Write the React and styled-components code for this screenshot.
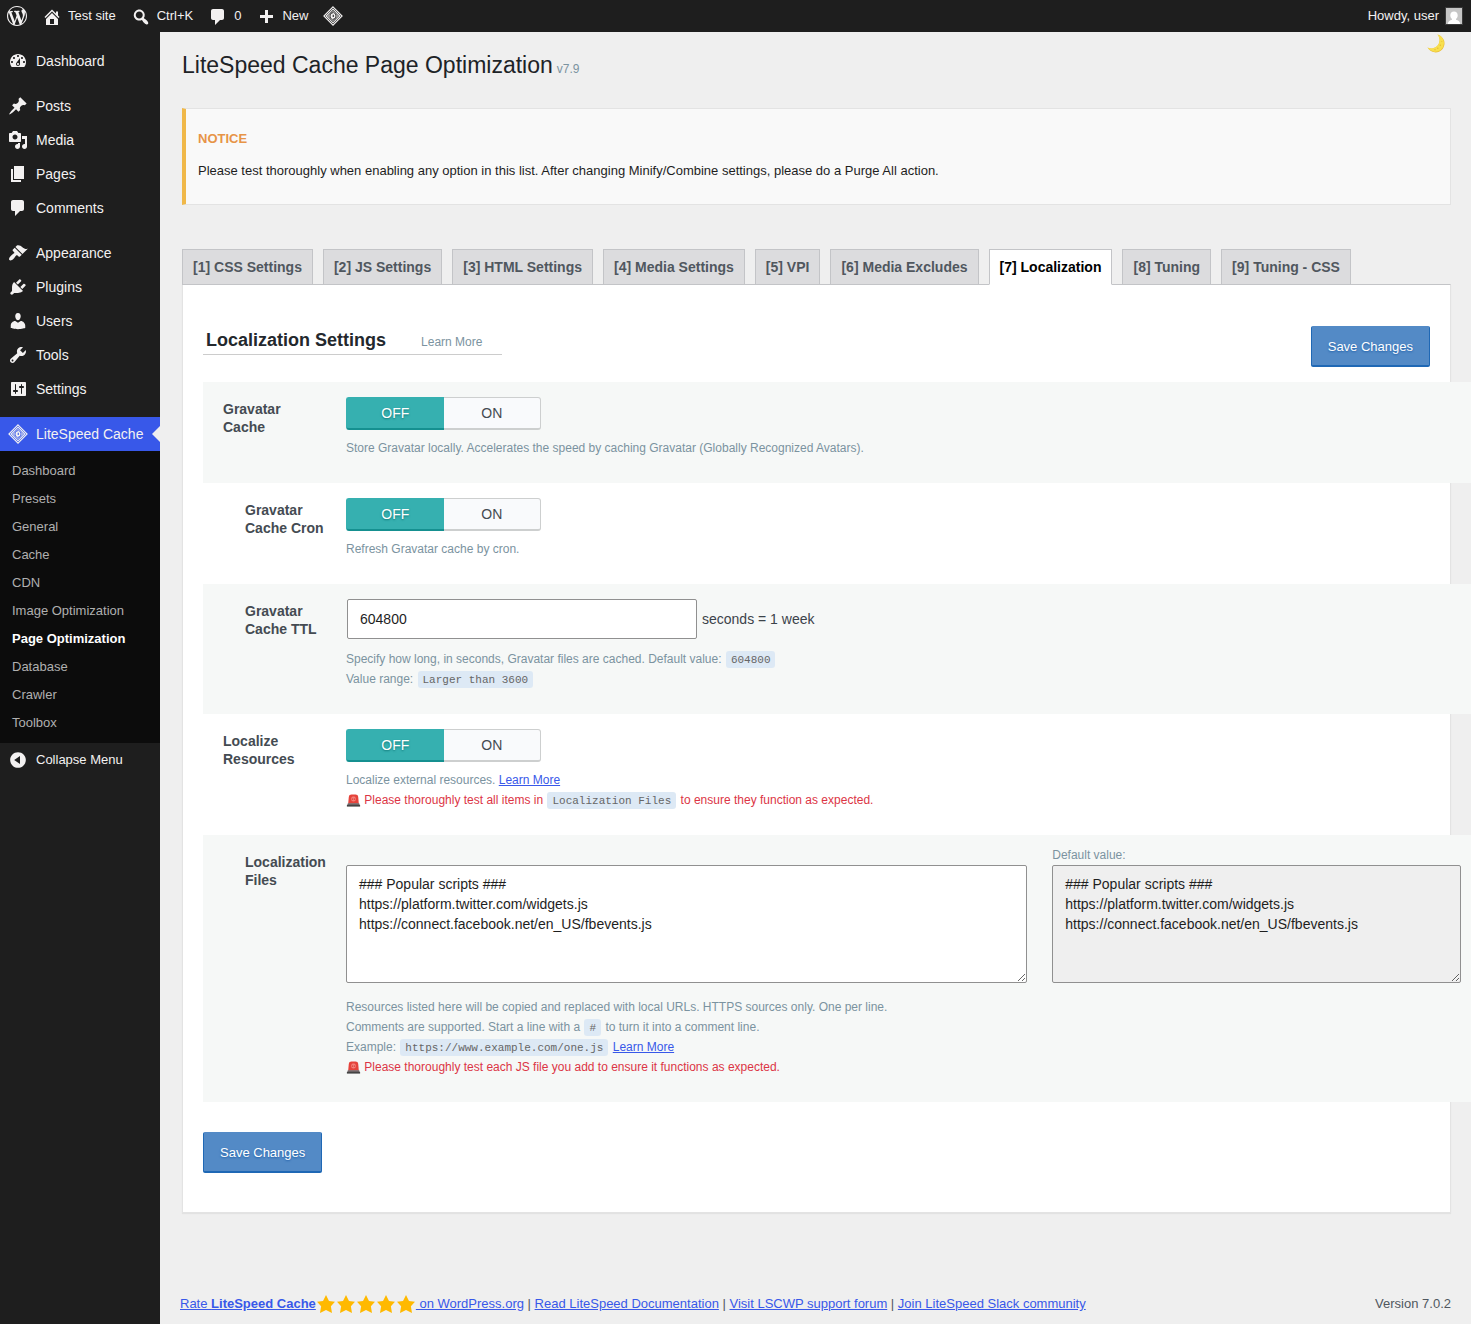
import React, { useState } from "react";
import styled, { createGlobalStyle, css } from "styled-components";

const GlobalStyle = createGlobalStyle`
    * {
        box-sizing: border-box;
    }

    body {
        margin: 0;
        background-color: #EFEFEF;
        color: #3C434A;
        font-family: "Liberation Sans", Arial, sans-serif;
        font-size: 13px;
        line-height: 20px;
        overflow-x: hidden;
    }

    a {
        color: #3858E9;
    }
`;

const icons = {
    wordpress: "M20 10c0-5.51-4.49-10-10-10C4.48 0 0 4.49 0 10c0 5.52 4.48 10 10 10 5.51 0 10-4.48 10-10zM7.78 15.37L4.37 6.22c.55-.02 1.17-.08 1.17-.08.5-.06.44-1.13-.06-1.11 0 0-1.45.11-2.37.11-.18 0-.37 0-.58-.01C4.12 2.69 6.87 1.11 10 1.11c2.33 0 4.45.87 6.05 2.34-.68-.11-1.65.39-1.65 1.58 0 .74.45 1.36.9 2.1.35.61.55 1.36.55 2.46 0 1.49-1.4 5-1.4 5l-3.03-8.37c.54-.02.82-.17.82-.17.5-.05.44-1.25-.06-1.22 0 0-1.44.12-2.38.12-.87 0-2.33-.12-2.33-.12-.5-.03-.56 1.2-.06 1.22l.92.08 1.26 3.41zM17.41 10c.24-.64.74-1.87.43-4.25.7 1.29 1.05 2.71 1.05 4.25 0 3.29-1.73 6.24-4.4 7.78.97-2.59 1.94-5.2 2.92-7.78zM6.1 18.09C3.12 16.65 1.11 13.53 1.11 10c0-1.3.23-2.48.72-3.59C3.25 10.3 4.67 14.2 6.1 18.09zm4.03-6.63l2.58 6.98c-.86.29-1.76.45-2.71.45-.79 0-1.57-.11-2.29-.33.81-2.38 1.62-4.74 2.42-7.1z",
    home: "M16 8.5l1.53 1.53-1.06 1.06L10 4.6l-6.47 6.49-1.06-1.06L10 2.5l4 4v-2h2v4zm-6-2.46l6 5.99V18H4v-5.97zM12 17v-5H8v5h4z",
    search: "M12.14 4.18c1.87 1.87 2.11 4.75.72 6.89.12.1.22.21.36.31.2.16.47.36.81.59.34.24.56.39.66.47.42.31.73.57.94.78.32.32.6.65.84 1 .25.35.44.69.59 1.04.14.35.21.68.18 1-.02.32-.14.59-.36.81s-.49.34-.81.36c-.31.02-.65-.04-.99-.19-.35-.14-.7-.34-1.04-.59-.35-.24-.68-.52-1-.84-.21-.21-.47-.52-.77-.93-.1-.13-.25-.35-.47-.66-.22-.32-.4-.57-.56-.78-.16-.2-.29-.35-.44-.5-2.07 1.09-4.69.76-6.44-.98-2.14-2.15-2.14-5.64 0-7.78 2.15-2.15 5.63-2.15 7.78 0zm-1.41 6.36c1.36-1.37 1.36-3.58 0-4.95-1.37-1.37-3.59-1.37-4.95 0-1.37 1.37-1.37 3.58 0 4.95 1.36 1.37 3.58 1.37 4.95 0z",
    plus: "M17 8v3h-5v5H9v-5H4V8h5V3h3v5h5z",
    dashboard: "M3.76 16h12.48c1.1-1.37 1.76-3.11 1.76-5 0-4.42-3.58-8-8-8s-8 3.58-8 8c0 1.89.66 3.63 1.76 5zM10 4c.55 0 1 .45 1 1s-.45 1-1 1-1-.45-1-1 .45-1 1-1zM6 6c.55 0 1 .45 1 1s-.45 1-1 1-1-.45-1-1 .45-1 1-1zm8 0c.55 0 1 .45 1 1s-.45 1-1 1-1-.45-1-1 .45-1 1-1zm-5.37 5.55L12 7v6c0 1.1-.9 2-2 2s-2-.9-2-2c0-.57.24-1.08.63-1.45zM4 10c.55 0 1 .45 1 1s-.45 1-1 1-1-.45-1-1 .45-1 1-1zm12 0c.55 0 1 .45 1 1s-.45 1-1 1-1-.45-1-1 .45-1 1-1zm-5 3c0-.55-.45-1-1-1s-1 .45-1 1 .45 1 1 1 1-.45 1-1z",
    post: "M10.44 3.02l1.82-1.82 6.36 6.35-1.83 1.82c-1.05-.68-2.48-.57-3.41.36l-.75.75c-.92.93-1.04 2.35-.35 3.41l-1.83 1.82-2.41-2.41-2.8 2.79c-.42.42-3.38 2.71-3.8 2.29s1.86-3.39 2.28-3.81l2.79-2.79L4.1 9.36l1.83-1.82c1.05.69 2.48.57 3.4-.36l.75-.75c.93-.92 1.05-2.35.36-3.41z",
    media: "M13 11V4c0-.55-.45-1-1-1h-1.67L9 1H5L3.67 3H2c-.55 0-1 .45-1 1v7c0 .55.45 1 1 1h10c.55 0 1-.45 1-1zM7 4.5c1.38 0 2.5 1.12 2.5 2.5S8.38 9.5 7 9.5 4.5 8.38 4.5 7 5.62 4.5 7 4.5zM14 6h5v10.5c0 1.38-1.12 2.5-2.5 2.5S14 17.88 14 16.5s1.12-2.5 2.5-2.5c.17 0 .34.02.5.05V9h-3V6zm-4 8.05V13h2v3.5c0 1.38-1.12 2.5-2.5 2.5S7 17.88 7 16.5 8.12 14 9.5 14c.17 0 .34.02.5.05z",
    page: "M6 15V2h10v13H6zm-1 1h8v2H3V5h2v11z",
    comments: "M5 2h9c1.1 0 2 .9 2 2v7c0 1.1-.9 2-2 2h-2l-5 5v-5H5c-1.1 0-2-.9-2-2V4c0-1.1.9-2 2-2z",
    appearance: "M14.48 11.06L7.41 3.99l1.5-1.5c.5-.56 2.3-.47 3.51.32 1.21.8 1.43 1.28 2.91 2.1 1.18.64 2.45 1.26 4.45.85zm-.71.71L6.7 4.7 4.93 6.47c-.39.39-.39 1.02 0 1.41l1.06 1.06c.39.39.39 1.03 0 1.42-.6.6-1.43 1.11-2.21 1.69-.35.26-.7.53-1.01.84C1.43 14.23.4 16.08 1.4 17.07c.99 1 2.84-.03 4.18-1.36.31-.31.58-.66.85-1.02.57-.78 1.08-1.61 1.69-2.21.39-.39 1.02-.39 1.41 0l1.06 1.06c.39.39 1.02.39 1.41 0z",
    plugins: "M13.11 4.36L9.87 7.6 8 5.73l3.24-3.24c.35-.34 1.05-.2 1.56.32.52.51.66 1.21.31 1.55zm-8 1.77l.91-1.12 9.01 9.01-1.19.84c-.71.71-2.63 1.16-3.82 1.16H6.14L4.9 17.26c-.59.59-1.54.59-2.12 0-.59-.58-.59-1.53 0-2.12l1.24-1.24v-3.88c0-1.13.4-3.19 1.09-3.89zm7.26 3.97l3.24-3.24c.34-.35 1.04-.21 1.55.31.52.51.66 1.21.31 1.55l-3.24 3.25z",
    users: "M10 9.25c-2.27 0-2.73-3.44-2.73-3.44C7 4.02 7.82 2 9.97 2c2.16 0 2.98 2.02 2.71 3.81 0 0-.41 3.44-2.68 3.44zm0 2.57L12.72 10c2.39 0 4.52 2.33 4.52 4.53v2.49s-3.65 1.13-7.24 1.13c-3.65 0-7.24-1.13-7.24-1.13v-2.49c0-2.25 1.94-4.48 4.47-4.48z",
    tools: "M16.68 9.77c-1.34 1.34-3.3 1.67-4.95.99l-5.41 6.52c-.99.99-2.59.99-3.58 0s-.99-2.59 0-3.57l6.52-5.42c-.68-1.65-.35-3.61.99-4.95 1.28-1.28 3.12-1.62 4.72-1.06l-2.89 2.89 2.82 2.82 2.86-2.87c.53 1.58.18 3.39-1.08 4.65zM3.81 16.21c.4.39 1.04.39 1.43 0 .4-.4.4-1.04 0-1.43-.39-.4-1.03-.4-1.43 0-.39.39-.39 1.03 0 1.43z",
    settings: "M18 16V4c0-.55-.45-1-1-1H4c-.55 0-1 .45-1 1v12c0 .55.45 1 1 1h13c.55 0 1-.45 1-1zM8 11h1c.55 0 1 .45 1 1s-.45 1-1 1H8v1.5c0 .28-.22.5-.5.5s-.5-.22-.5-.5V13H6c-.55 0-1-.45-1-1s.45-1 1-1h1V5.5c0-.28.22-.5.5-.5s.5.22.5.5V11zm5-2h-1c-.55 0-1-.45-1-1s.45-1 1-1h1V5.5c0-.28.22-.5.5-.5s.5.22.5.5V7h1c.55 0 1 .45 1 1s-.45 1-1 1h-1v5.5c0 .28-.22.5-.5.5s-.5-.22-.5-.5V9z",
    collapse: "M10 2.16c4.33 0 7.84 3.51 7.84 7.84s-3.51 7.84-7.84 7.84S2.16 14.33 2.16 10 5.67 2.16 10 2.16zm2 11.72V6.12L6.18 9.97z",
    star: "M10 1l3 6 6 .75-4.12 4.62L16 19l-6-3-6 3 1.13-6.63L1 7.75 7 7z",
};

const StyledSvg = styled.svg`
    width: 20px;
    height: 20px;
    flex-shrink: 0;
    fill: currentColor;
`;

const Icon = ({ name, className }) => (
    <StyledSvg viewBox="0 0 20 20" className={className} aria-hidden="true">
        <path fillRule="evenodd" d={icons[name]} />
    </StyledSvg>
);

const LiteSpeedIcon = ({ backdrop }) => (
    <StyledSvg viewBox="0 0 20 20" aria-hidden="true">
        <g fill="none" stroke="currentColor">
            <path strokeWidth="1.1" d="M10 .9L19.1 10 10 19.1.9 10z" />
            <path strokeWidth="1.1" d="M10 3.2L16.8 10 10 16.8 3.2 10z" />
        </g>
        <path d="M10 4.900L15.100 10 10 15.100 4.900 10z" />
        <g fill="none" stroke={backdrop} strokeWidth="1">
            <path d="M10.600 6.600A3.400 3.400 0 0 0 8.400 12.800" />
            <path d="M9.400 13.400A3.400 3.400 0 0 0 11.600 7.200" />
        </g>
        <path fill={backdrop} d="M9.700 8.800h1.100v2.200H9.700z" />
    </StyledSvg>
);

const StyledMoon = styled.svg`
    display: block;
    width: 18px;
    height: 19px;
`;

const Moon = () => (
    <StyledMoon viewBox="0 0 18 19" aria-hidden="true">
        <path fill="#E9BC38" d="M10.500.6A9 9 0 1 1 .5 13.500A8.300 8.300 0 0 0 10.500.6z" />
        <path fill="#F8E04E" d="M10.500.6A9 9 0 0 1 13.800 16A9.500 9.500 0 0 1 .5 13.500A8.300 8.300 0 0 0 10.500.6z" />
        <g fill="#E8B936">
            <circle cx="14.800" cy="7.400" r=".5" />
            <circle cx="13.300" cy="11.300" r=".7" />
            <circle cx="10.800" cy="14.200" r=".7" />
            <circle cx="8" cy="15.800" r=".7" />
        </g>
    </StyledMoon>
);

const StyledSiren = styled.svg`
    width: 15px;
    height: 13px;
    vertical-align: -3px;
`;

const Siren = () => (
    <StyledSiren viewBox="0 0 15 13" aria-hidden="true">
        <path fill="#E5433B" d="M2.200 9.500L2.800 2.900C3 1.300 4 .5 5.500.5h4c1.500 0 2.500.8 2.700 2.400l.6 6.600z" />
        <path fill="#F58078" d="M5.300 4.200C5.300 3 6.200 2.400 7.500 2.400s2.200.6 2.200 1.800v1.600c0 1-.9 1.700-2.200 1.700s-2.200-.7-2.200-1.700z" />
        <path fill="#C92F2B" d="M6.200 4.400h.9v1.300h-.9zM7.900 4.400h.9v1.300h-.9z" />
        <path fill="#6A6264" d="M1.900 9.300h11.200l.8 1.900H1.100z" />
        <path fill="#444" d="M.9 11h13.200v1.600H.9z" />
    </StyledSiren>
);

const StyledAdminBar = styled.header`
    display: flex;
    align-items: center;
    justify-content: space-between;
    height: 32px;
    padding: 0 8px 0 7px;
    background-color: #1E1E1E;
    color: #F3F1F1;
`;

const StyledBarGroup = styled.nav`
    display: flex;
    align-items: center;
    gap: 15px;
`;

const StyledBarLink = styled.a`
    display: flex;
    align-items: center;
    gap: 6px;
    color: inherit;
    text-decoration: none;
`;

const StyledBarIcon = styled(Icon)`
    margin-top: 2px;
`;

const StyledAvatar = styled.svg`
    width: 18px;
    height: 18px;
    border: 1px solid #3A3A3A;
`;

const StyledBody = styled.div`
    display: flex;
    min-height: calc(100vh - 32px);
`;

const StyledSidebar = styled.nav`
    flex: 0 0 160px;
    padding-top: 12px;
    background-color: #1E1E1E;
    color: #F3F1F1;
`;

const StyledMenu = styled.ul`
    margin: 0;
    padding: 0;
    list-style-type: none;
`;

const StyledMenuItem = styled.li`
    margin-top: ${props => (props.$spaced ? "11px" : "0")};
`;

const StyledMenuLink = styled.a`
    position: relative;
    display: flex;
    align-items: center;
    gap: 8px;
    height: 34px;
    padding-left: 8px;
    color: inherit;
    font-size: 14px;
    text-decoration: none;

    ${props =>
        props.$current &&
        css`
            background-color: #3858E9;

            &::after {
                content: "";
                position: absolute;
                right: 0;
                border: 8px solid transparent;
                border-left-width: 0;
                border-right-color: #EFEFEF;
            }
    `}
`;

const StyledSubMenu = styled.ul`
    margin: 0;
    padding: 6px 0;
    background-color: #0C0C0C;
    list-style-type: none;
`;

const StyledSubLink = styled.a`
    display: block;
    padding: 4px 12px;
    color: ${props => (props.$current ? "#FFF" : "#B0B0B0")};
    font-weight: ${props => (props.$current ? "bold" : "normal")};
    text-decoration: none;
`;

const StyledCollapse = styled.button`
    display: flex;
    align-items: center;
    gap: 8px;
    width: 100%;
    height: 34px;
    padding: 0 0 0 8px;
    border: 0;
    background: none;
    color: inherit;
    font: inherit;
`;

const StyledContent = styled.div`
    flex: 1;
    min-width: 0;
    display: flex;
    flex-direction: column;
    position: relative;
    padding: 0 20px 10px;
`;

const StyledMain = styled.main`
    padding: 18px 0 60px 2px;
`;

const StyledThemeButton = styled.button`
    position: absolute;
    top: 2px;
    right: 26px;
    padding: 0;
    border: 0;
    background: none;
`;

const StyledTitle = styled.h1`
    margin: 0;
    color: #1D2327;
    font-size: 23px;
    font-weight: normal;
    line-height: 30px;
`;

const StyledVersion = styled.small`
    margin-left: 4px;
    color: #7B93A0;
    font-size: 12px;
`;

const StyledNotice = styled.section`
    margin-top: 24px;
    padding: 20px 12px 24px;
    border: 1px solid #E3E3E3;
    border-left: 4px solid #F0B849;
    background-color: #F9F9F9;
    color: #1E1E1E;
`;

const StyledNoticeTitle = styled.h2`
    margin: 0 0 12px;
    color: #E79447;
    font-size: 13px;
    line-height: 20px;
`;

const StyledNoticeText = styled.p`
    margin: 0;
    line-height: 19px;
`;

const StyledTabs = styled.nav`
    display: flex;
    flex-wrap: wrap;
    gap: 0 10px;
    margin: 44px 0 -1px;
`;

const StyledTab = styled.a`
    position: relative;
    padding: 5px 10px;
    border: 1px solid #C3C4C7;
    background-color: #DCDCDE;
    color: #50575E;
    font-size: 14px;
    font-weight: bold;
    line-height: 24px;
    text-decoration: none;

    ${props =>
        props.$active &&
        css`
            border-bottom-color: #FFF;
            background-color: #FFF;
            color: #000;
    `}
`;

const StyledPanel = styled.form`
    padding: 41px 20px 39px;
    border: 1px solid #E3E3E3;
    border-top-color: #C3C4C7;
    background-color: #FFF;
    box-shadow: 0 1px 1px rgba(0, 0, 0, 0.05);
`;

const StyledPanelHeader = styled.div`
    display: flex;
    align-items: flex-start;
    justify-content: space-between;
    margin-bottom: 15px;
`;

const StyledPanelTitle = styled.h3`
    display: flex;
    align-items: baseline;
    gap: 35px;
    margin: 0;
    padding: 0 20px 0 3px;
    border-bottom: 1px solid #CCC;
    color: #23282D;
    font-size: 18px;
    line-height: 28px;
`;

const StyledDocLink = styled.a`
    color: #7B93A0;
    font-size: 12px;
    font-weight: normal;
    line-height: 20px;
    text-decoration: none;
`;

const StyledSave = styled.button`
    height: 41px;
    padding: 1px 16px 0;
    border: 1px solid #1F68B5;
    border-top-color: #538AC6;
    border-bottom-width: 2px;
    border-radius: 2px;
    background-color: #538AC6;
    color: #FFF;
    font: inherit;
    text-shadow: 0 1px 2px #1F5FA8;
`;

/* the table runs past the panel to the window's edge */
const StyledTable = styled.table`
    width: calc(100% + 41px);
    margin: 0 -41px 30px 0;
    border-collapse: collapse;
`;

const StyledRow = styled.tr`
    &:nth-child(odd) {
        background-color: #F6F8F7;
    }
`;

const StyledHeading = styled.th`
    width: 133px;
    padding: 18px ${props => (props.$indent ? "0 0 42px" : "20px 0 20px")};
    color: #444B52;
    font-size: 14px;
    line-height: 18px;
    text-align: left;
    vertical-align: top;
`;

const StyledCell = styled.td`
    padding: ${props => (props.$tight ? "10px" : "15px")} 10px 25px;
    font-size: 14px;
    vertical-align: top;
`;

const StyledSwitch = styled.div`
    display: flex;
    width: 195px;
    margin-bottom: 8px;
`;

const StyledRadio = styled.input`
    position: absolute;
    opacity: 0;
`;

const StyledOption = styled.label`
    flex: 1 1 50%;
    height: 33px;
    border: 1px solid #CDCFCF;
    border-left: 0;
    border-bottom-width: 2px;
    border-radius: 0 3px 3px 0;
    background-color: #F9FAFC;
    color: #444B52;
    line-height: 30px;
    text-align: center;

    &:first-of-type {
        border-left: 1px solid #CDCFCF;
        border-right: 0;
        border-radius: 3px 0 0 3px;
    }

    ${StyledRadio}:checked + && {
        border-color: #36B0B0;
        border-bottom-color: #159090;
        background-color: #36B0B0;
        color: #FFF;
        text-shadow: 0 1px 2px #117878;
    }

    ${StyledRadio}:focus-visible + & {
        outline: 2px solid #3858E9;
    }
`;

const StyledInput = styled.input`
    width: 350px;
    height: 40px;
    margin: 0 1px;
    padding: 0 12px;
    border: 1px solid #909090;
    border-radius: 2px;
    background-color: #FFF;
    color: #1E1E1E;
    font: inherit;
`;

const StyledInputLine = styled.div`
    display: flex;
    align-items: center;
    gap: 4px;
    margin-bottom: 10px;
`;

const StyledEditors = styled.div`
    display: flex;
    align-items: flex-end;
    gap: 25px;
    margin-bottom: 14px;
`;

const StyledEditor = styled.div`
    flex: ${props => props.$grow} 1 0;
    display: flex;
    flex-direction: column;
`;

const StyledEditorLabel = styled.label`
    color: #7B93A0;
    font-size: 12px;
    line-height: 20px;
`;

const StyledTextarea = styled.textarea`
    display: block;
    width: 100%;
    height: 118px;
    padding: 8px 12px;
    border: 1px solid #909090;
    border-radius: 2px;
    background-color: ${props => (props.readOnly ? "#EFEFEF" : "#FFF")};
    color: #1E1E1E;
    font: inherit;
    line-height: 20px;
`;

const StyledDesc = styled.div`
    color: #7B93A0;
    font-size: 12px;
    line-height: 20px;
`;

const StyledWarning = styled.span`
    color: #DC3545;
`;

const StyledCode = styled.code`
    margin: 0 1px;
    padding: 3px 5px 2px;
    border-radius: 3px;
    background-color: #DDE9F5;
    color: #666;
    font-family: "Liberation Mono", monospace;
    font-size: 11px;
    line-height: 1;
`;

const StyledFooter = styled.footer`
    display: flex;
    justify-content: space-between;
    gap: 20px;
    margin-top: auto;
    color: #50575E;
`;

const StyledStar = styled(Icon)`
    color: #FFB900;
    vertical-align: top;
`;

const menu = [
    { icon: "dashboard", label: "Dashboard" },
    { icon: "post", label: "Posts", spaced: true },
    { icon: "media", label: "Media" },
    { icon: "page", label: "Pages" },
    { icon: "comments", label: "Comments" },
    { icon: "appearance", label: "Appearance", spaced: true },
    { icon: "plugins", label: "Plugins" },
    { icon: "users", label: "Users" },
    { icon: "tools", label: "Tools" },
    { icon: "settings", label: "Settings" },
];

const subMenu = [
    "Dashboard",
    "Presets",
    "General",
    "Cache",
    "CDN",
    "Image Optimization",
    "Page Optimization",
    "Database",
    "Crawler",
    "Toolbox",
];

const tabs = [
    "CSS Settings",
    "JS Settings",
    "HTML Settings",
    "Media Settings",
    "VPI",
    "Media Excludes",
    "Localization",
    "Tuning",
    "Tuning - CSS",
];

const scripts = `### Popular scripts ###
https://platform.twitter.com/widgets.js
https://connect.facebook.net/en_US/fbevents.js`;

const AdminBar = () => (
    <StyledAdminBar>
        <StyledBarGroup>
            <StyledBarLink href="#about" aria-label="About WordPress"><Icon name="wordpress" /></StyledBarLink>
            <StyledBarLink href="#site"><StyledBarIcon name="home" />Test site</StyledBarLink>
            <StyledBarLink href="#search"><StyledBarIcon name="search" />Ctrl+K</StyledBarLink>
            <StyledBarLink href="#comments"><StyledBarIcon name="comments" />0</StyledBarLink>
            <StyledBarLink href="#new"><StyledBarIcon name="plus" />New</StyledBarLink>
            <StyledBarLink href="#litespeed" aria-label="LiteSpeed Cache"><LiteSpeedIcon backdrop="#1E1E1E" /></StyledBarLink>
        </StyledBarGroup>
        <StyledBarLink href="#profile">
            Howdy, user
            <StyledAvatar viewBox="0 0 16 16" aria-hidden="true">
                <path fill="#C6C6C6" d="M0 0h16v16H0z" />
                <path fill="#FFF" d="M8 3.5c2.3 0 3.7 1.6 3.7 3.8 0 1.6-.7 2.9-1.7 3.6v.9c2.2.5 3.8 1.6 4.3 4.2H1.7c.5-2.6 2.1-3.7 4.3-4.2v-.9C5 10.2 4.3 8.9 4.3 7.3c0-2.2 1.4-3.8 3.7-3.8z" />
            </StyledAvatar>
        </StyledBarLink>
    </StyledAdminBar>
);

const Sidebar = () => (
    <StyledSidebar aria-label="Main menu">
        <StyledMenu>
            {menu.map((item) => (
                <StyledMenuItem key={item.label} $spaced={item.spaced}>
                    <StyledMenuLink href="#menu"><Icon name={item.icon} />{item.label}</StyledMenuLink>
                </StyledMenuItem>
            ))}
            <StyledMenuItem $spaced>
                <StyledMenuLink href="#litespeed" $current><LiteSpeedIcon backdrop="#3858E9" />LiteSpeed Cache</StyledMenuLink>
                <StyledSubMenu>
                    {subMenu.map((label) => (
                        <li key={label}>
                            <StyledSubLink href="#submenu" $current={label === "Page Optimization"}>{label}</StyledSubLink>
                        </li>
                    ))}
                </StyledSubMenu>
            </StyledMenuItem>
        </StyledMenu>
        <StyledCollapse type="button"><Icon name="collapse" />Collapse Menu</StyledCollapse>
    </StyledSidebar>
);

const Switch = ({ name, label }) => {
    const [value, setValue] = useState("OFF");

    return (
        <StyledSwitch role="radiogroup" aria-label={label}>
            {["OFF", "ON"].map((option) => (
                <React.Fragment key={option}>
                    <StyledRadio
                        type="radio"
                        id={`${name}-${option}`}
                        name={name}
                        checked={value === option}
                        onChange={() => setValue(option)}
                    />
                    <StyledOption htmlFor={`${name}-${option}`}>{option}</StyledOption>
                </React.Fragment>
            ))}
        </StyledSwitch>
    );
};

const Settings = () => (
    <StyledTable>
        <tbody>
            <StyledRow>
                <StyledHeading scope="row">Gravatar Cache</StyledHeading>
                <StyledCell>
                    <Switch name="gravatar" label="Gravatar Cache" />
                    <StyledDesc>
                        Store Gravatar locally. Accelerates the speed by caching Gravatar (Globally Recognized Avatars).
                    </StyledDesc>
                </StyledCell>
            </StyledRow>
            <StyledRow>
                <StyledHeading scope="row" $indent>Gravatar Cache Cron</StyledHeading>
                <StyledCell>
                    <Switch name="cron" label="Gravatar Cache Cron" />
                    <StyledDesc>Refresh Gravatar cache by cron.</StyledDesc>
                </StyledCell>
            </StyledRow>
            <StyledRow>
                <StyledHeading scope="row" $indent><label htmlFor="ttl">Gravatar Cache TTL</label></StyledHeading>
                <StyledCell>
                    <StyledInputLine>
                        <StyledInput id="ttl" type="text" defaultValue="604800" />
                        <span>seconds = 1 week</span>
                    </StyledInputLine>
                    <StyledDesc>
                        Specify how long, in seconds, Gravatar files are cached. Default value: <StyledCode>604800</StyledCode>
                        <br />
                        Value range: <StyledCode>Larger than 3600</StyledCode>
                    </StyledDesc>
                </StyledCell>
            </StyledRow>
            <StyledRow>
                <StyledHeading scope="row">Localize Resources</StyledHeading>
                <StyledCell>
                    <Switch name="localize" label="Localize Resources" />
                    <StyledDesc>
                        Localize external resources. <a href="#learn">Learn More</a>
                        <br />
                        <StyledWarning>
                            <Siren /> Please thoroughly test all items in <StyledCode>Localization Files</StyledCode> to ensure they function as expected.
                        </StyledWarning>
                    </StyledDesc>
                </StyledCell>
            </StyledRow>
            <StyledRow>
                <StyledHeading scope="row" $indent><label htmlFor="files">Localization Files</label></StyledHeading>
                <StyledCell $tight>
                    <StyledEditors>
                        <StyledEditor $grow={5}>
                            <StyledTextarea id="files" defaultValue={scripts} spellCheck="false" />
                        </StyledEditor>
                        <StyledEditor $grow={3}>
                            <StyledEditorLabel htmlFor="default-files">Default value:</StyledEditorLabel>
                            <StyledTextarea id="default-files" value={scripts} readOnly spellCheck="false" />
                        </StyledEditor>
                    </StyledEditors>
                    <StyledDesc>
                        Resources listed here will be copied and replaced with local URLs. HTTPS sources only. One per line.
                        <br />
                        Comments are supported. Start a line with a <StyledCode>#</StyledCode> to turn it into a comment line.
                        <br />
                        Example: <StyledCode>https://www.example.com/one.js</StyledCode> <a href="#learn">Learn More</a>
                        <br />
                        <StyledWarning>
                            <Siren /> Please thoroughly test each JS file you add to ensure it functions as expected.
                        </StyledWarning>
                    </StyledDesc>
                </StyledCell>
            </StyledRow>
        </tbody>
    </StyledTable>
);

const Footer = () => (
    <StyledFooter>
        <span>
            <a href="#rate">
                Rate <strong>LiteSpeed Cache</strong>
                {[1, 2, 3, 4, 5].map((star) => <StyledStar key={star} name="star" />)}
                {" on WordPress.org"}
            </a>
            {" | "}
            <a href="#docs">Read LiteSpeed Documentation</a>
            {" | "}
            <a href="#forum">Visit LSCWP support forum</a>
            {" | "}
            <a href="#slack">Join LiteSpeed Slack community</a>
        </span>
        <span>Version 7.0.2</span>
    </StyledFooter>
);

const App = () => {
    return (
        <>
            <GlobalStyle />
            <AdminBar />
            <StyledBody>
                <Sidebar />
                <StyledContent>
                    <StyledMain>
                        <StyledThemeButton type="button" aria-label="Toggle dark mode"><Moon /></StyledThemeButton>
                        <StyledTitle>
                            LiteSpeed Cache Page Optimization<StyledVersion>v7.9</StyledVersion>
                        </StyledTitle>
                        <StyledNotice>
                            <StyledNoticeTitle>NOTICE</StyledNoticeTitle>
                            <StyledNoticeText>
                                Please test thoroughly when enabling any option in this list. After changing Minify/Combine settings, please do a Purge All action.
                            </StyledNoticeText>
                        </StyledNotice>
                        <StyledTabs>
                            {tabs.map((tab, index) => (
                                <StyledTab key={tab} href="#tab" $active={tab === "Localization"}>
                                    [{index + 1}] {tab}
                                </StyledTab>
                            ))}
                        </StyledTabs>
                        <StyledPanel>
                            <StyledPanelHeader>
                                <StyledPanelTitle>
                                    Localization Settings
                                    <StyledDocLink href="#learn">Learn More</StyledDocLink>
                                </StyledPanelTitle>
                                <StyledSave type="button">Save Changes</StyledSave>
                            </StyledPanelHeader>
                            <Settings />
                            <StyledSave type="button">Save Changes</StyledSave>
                        </StyledPanel>
                    </StyledMain>
                    <Footer />
                </StyledContent>
            </StyledBody>
        </>
    );
};

export default App;
